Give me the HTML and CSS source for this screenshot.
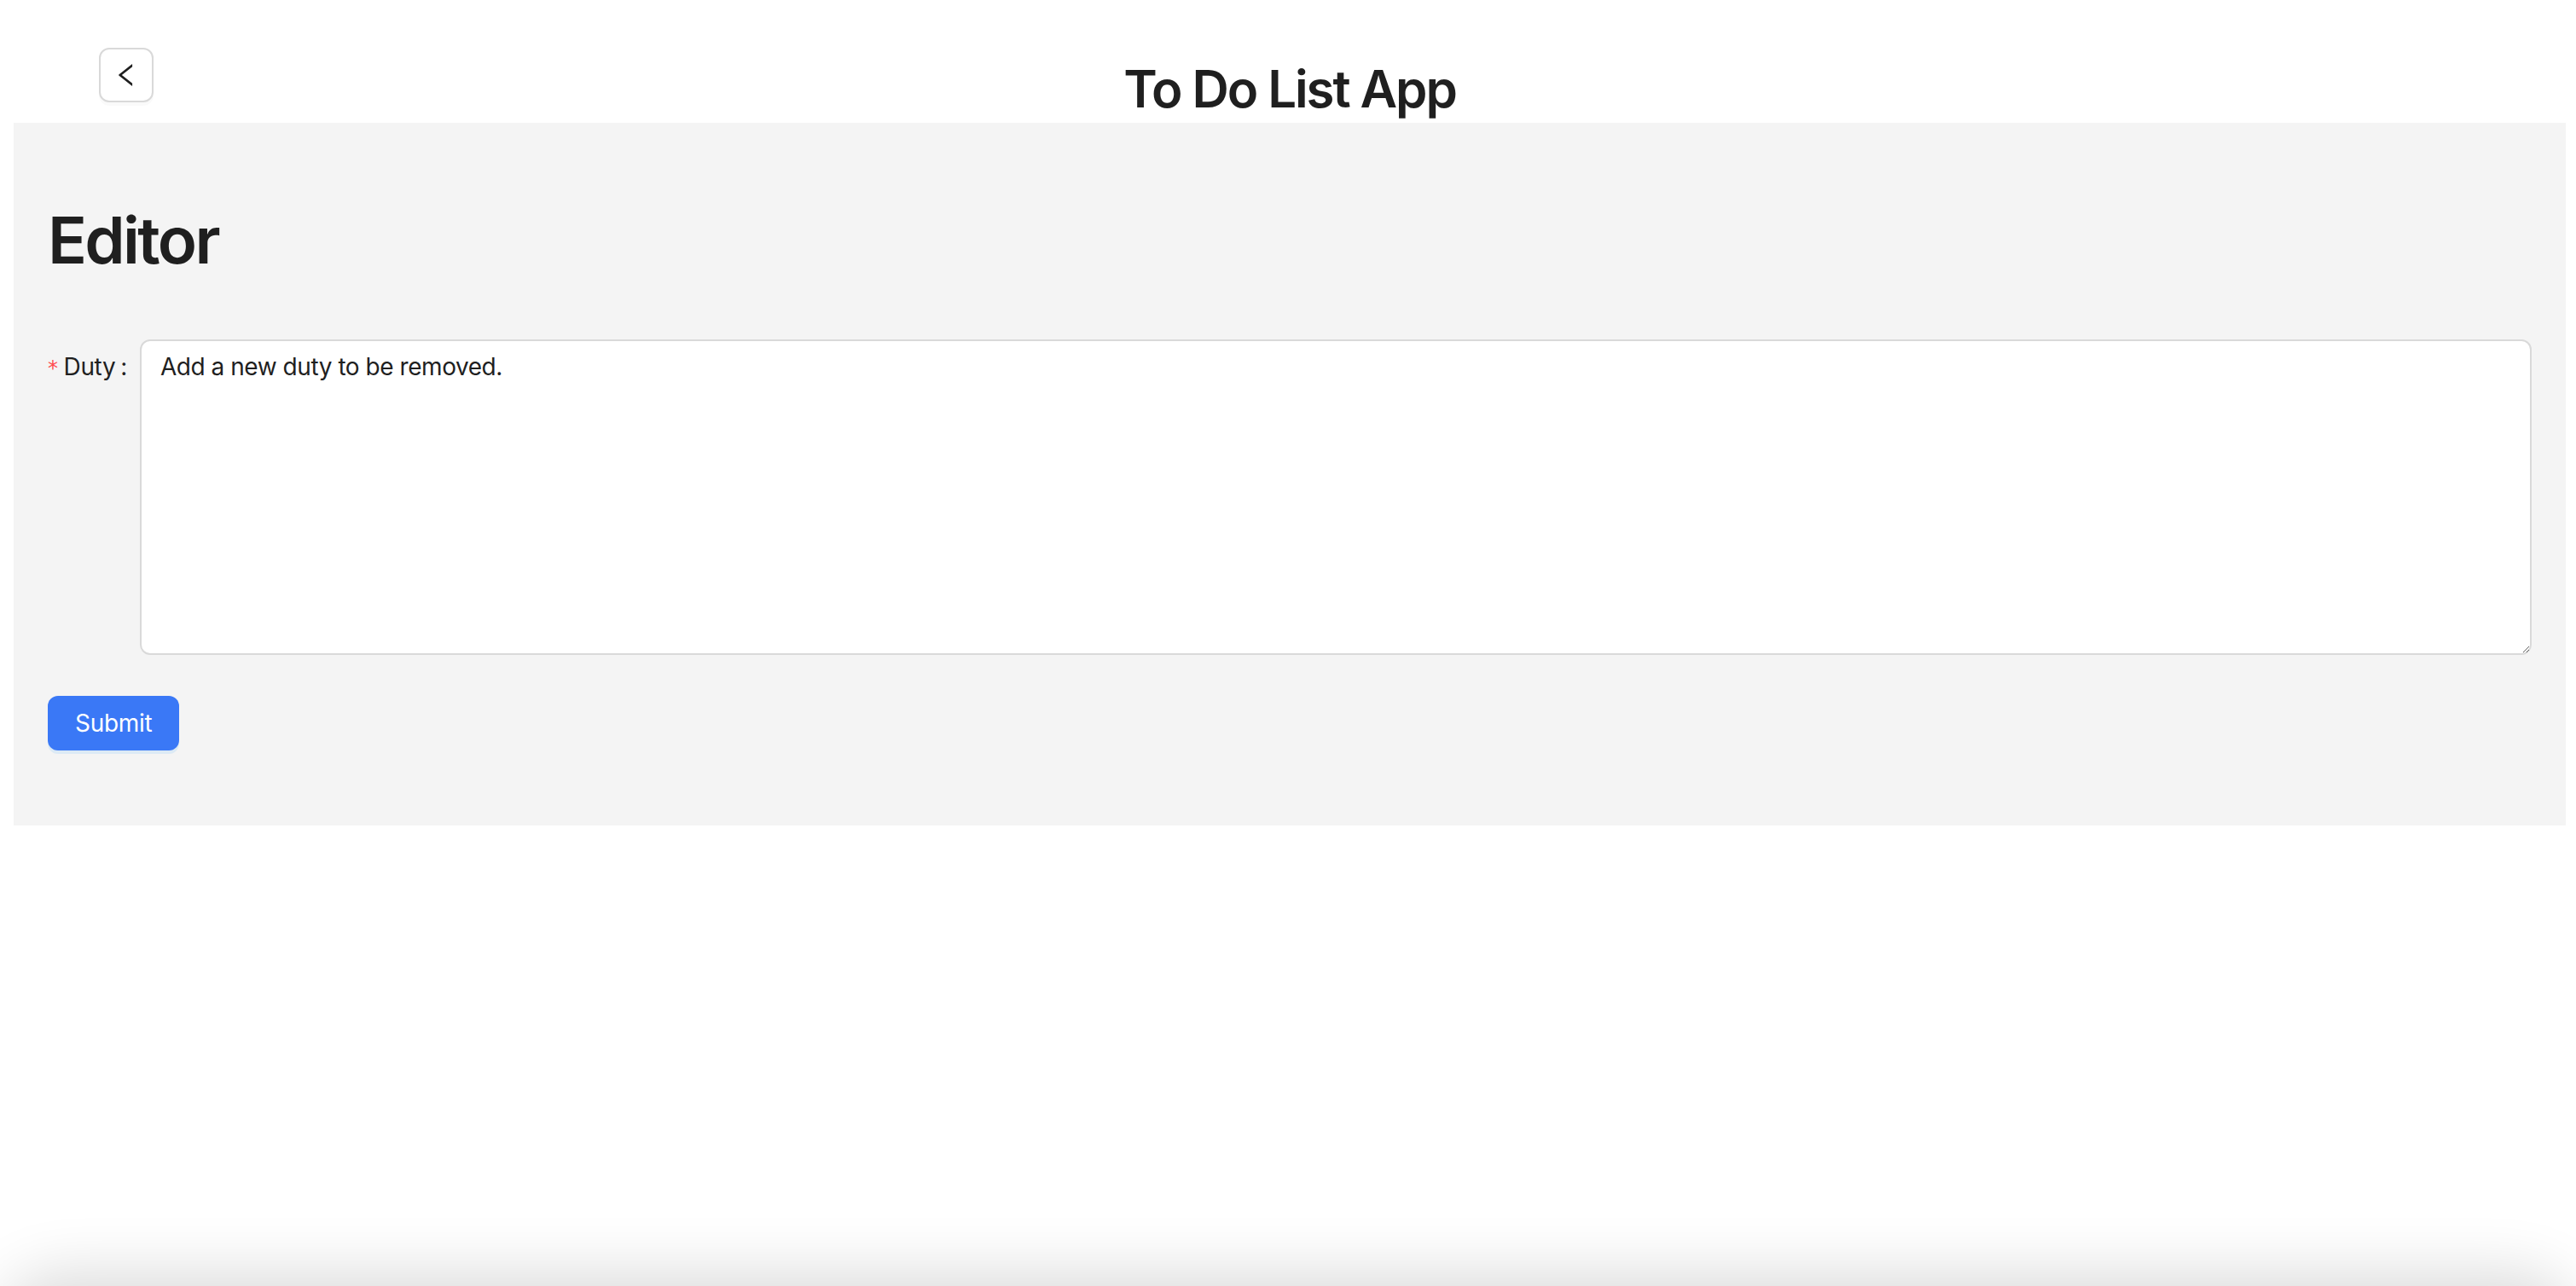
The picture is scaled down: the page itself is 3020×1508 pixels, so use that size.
FILE: index.html
```html
<!DOCTYPE html>
<html lang="en">
<head>
<meta charset="utf-8">
<title>To Do List App</title>
<link rel="stylesheet" href="styles.css">
</head>
<body>
<div class="page">
  <header class="header">
    <button class="back-btn" type="button" aria-label="Back">
      <svg class="back-icon" viewBox="64 64 896 896" aria-hidden="true"><path d="M724 218.3V141c0-6.7-7.7-10.4-12.9-6.3L260.3 486.8a31.86 31.86 0 000 50.3l450.8 352.1c5.3 4.1 12.9.4 12.9-6.3v-77.3c0-4.9-2.3-9.6-6.1-12.6l-360-281 360-281.1c3.8-3 6.1-7.7 6.1-12.6z"/></svg>
    </button>
    <h2 class="app-title">To Do List App</h2>
    <div class="header-spacer"></div>
  </header>
  <main class="panel">
    <h1 class="panel-title">Editor</h1>
    <form class="form">
      <div class="form-row">
        <label class="form-label" for="duty"><span class="req">*</span>Duty<span class="colon">:</span></label>
        <textarea id="duty" class="textarea">Add a new duty to be removed.</textarea>
      </div>
      <div class="form-actions">
        <button class="submit-btn" type="button">Submit</button>
      </div>
    </form>
  </main>
</div>
<div class="bottom-shade"></div>
</body>
</html>
```
FILE: styles.css
```css
html, body {
  margin: 0;
  padding: 0;
  background: #ffffff;
  height: 100%;
  overflow: hidden;
}
body {
  font-family: Inter, "Liberation Sans", sans-serif;
  color: #1f1f1f;
}
.page {
  padding: 0 12px 0 16px;
}
.header {
  height: 144px;
  display: grid;
  grid-template-columns: 1fr auto 1fr;
  align-items: start;
}
.back-btn {
  margin: 56px 0 0 100px;
  width: 64px;
  height: 64px;
  box-sizing: border-box;
  border: 2px solid #d9d9d9;
  border-radius: 12px;
  background: #ffffff;
  box-shadow: 0 4px 0 rgba(0, 0, 0, 0.02);
  display: flex;
  align-items: center;
  justify-content: center;
  padding: 0;
  cursor: pointer;
}
.back-icon {
  width: 30px;
  height: 30px;
  fill: #1f1f1f;
}
.app-title {
  margin: 68px 0 0 0;
  font-size: 60px;
  line-height: 72px;
  font-weight: 600;
  letter-spacing: -0.035em;
  white-space: nowrap;
}
.panel {
  background: #f4f4f4;
  padding: 40px;
}
.panel-title {
  margin: 51px 0 71px 0;
  font-size: 76px;
  line-height: 92px;
  font-weight: 600;
  letter-spacing: -0.035em;
}
.form-row {
  display: flex;
  align-items: flex-start;
}
.form-label {
  height: 64px;
  line-height: 64px;
  font-size: 28px;
  letter-spacing: -0.4px;
  white-space: nowrap;
  display: flex;
  align-items: baseline;
}
.req {
  color: #ff4d4f;
  font-family: "DejaVu Sans", sans-serif;
  font-size: 24px;
  margin: 0 7px 0 0;
}
.colon {
  margin: 0 15px 0 6px;
}
.textarea {
  flex: 1;
  height: 370px;
  box-sizing: border-box;
  border: 2px solid #d9d9d9;
  border-radius: 12px;
  padding: 8px 22px;
  font-family: Inter, "Liberation Sans", sans-serif;
  font-size: 28px;
  line-height: 44px;
  letter-spacing: -0.45px;
  color: #1f1f1f;
  background: #ffffff;
  outline: none;
  resize: vertical;
  margin: 0;
}
.form-actions {
  margin: 48px 0 48px 0;
}
.submit-btn {
  height: 64px;
  padding: 0 32px;
  border: none;
  border-radius: 12px;
  background: #3a78f6;
  color: #ffffff;
  font-family: Inter, "Liberation Sans", sans-serif;
  font-size: 28px;
  letter-spacing: -0.3px;
  box-shadow: 0 4px 0 rgba(5, 145, 255, 0.1);
  cursor: pointer;
}
.bottom-shade {
  position: fixed;
  left: 10px;
  right: 10px;
  bottom: -120px;
  height: 120px;
  border-radius: 90px;
  box-shadow: 0 -6px 70px 10px rgba(0, 0, 0, 0.14);
  background: #e2e2e2;
  pointer-events: none;
}
```
